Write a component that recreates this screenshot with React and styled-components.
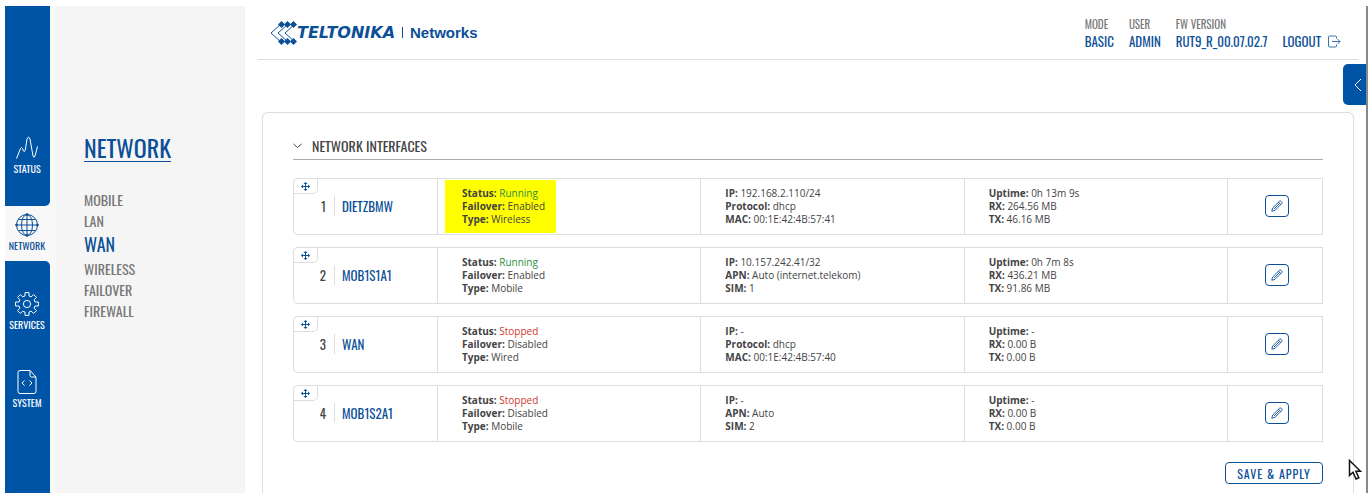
import React from "react";
import styled, { createGlobalStyle } from "styled-components";

const condensed = `"Oswald", "Roboto Condensed", "Liberation Sans Narrow", "Liberation Sans", sans-serif`;

const menu = ["Mobile", "LAN", "WAN", "Wireless", "Failover", "Firewall"];

const interfaces = [
  {
    name: "DIETZBMW",
    marked: true,
    running: true,
    status: [["Failover", "Enabled"], ["Type", "Wireless"]],
    address: [["IP", "192.168.2.110/24"], ["Protocol", "dhcp"], ["MAC", "00:1E:42:4B:57:41"]],
    traffic: [["Uptime", "0h 13m 9s"], ["RX", "264.56 MB"], ["TX", "46.16 MB"]],
  },
  {
    name: "MOB1S1A1",
    running: true,
    status: [["Failover", "Enabled"], ["Type", "Mobile"]],
    address: [["IP", "10.157.242.41/32"], ["APN", "Auto (internet.telekom)"], ["SIM", "1"]],
    traffic: [["Uptime", "0h 7m 8s"], ["RX", "436.21 MB"], ["TX", "91.86 MB"]],
  },
  {
    name: "WAN",
    running: false,
    status: [["Failover", "Disabled"], ["Type", "Wired"]],
    address: [["IP", "-"], ["Protocol", "dhcp"], ["MAC", "00:1E:42:4B:57:40"]],
    traffic: [["Uptime", "-"], ["RX", "0.00 B"], ["TX", "0.00 B"]],
  },
  {
    name: "MOB1S2A1",
    running: false,
    status: [["Failover", "Disabled"], ["Type", "Mobile"]],
    address: [["IP", "-"], ["APN", "Auto"], ["SIM", "2"]],
    traffic: [["Uptime", "-"], ["RX", "0.00 B"], ["TX", "0.00 B"]],
  },
];

const StatusIcon = () => (
  <svg width="24" height="24" viewBox="0 0 24 24">
    <path d="M1.5 22.5L5.5 12.5Q6.5 10.500 7.5 12.5L8.500 15Q9.500 16.5 10.3 14L12 3Q13.5 -.5 15 3L18 20Q19 22.500 20 20L22.5 10.5" />
  </svg>
);

const GlobeIcon = () => (
  <svg width="24" height="24" viewBox="0 0 24 24">
    <circle cx="12" cy="12" r="10.5" />
    <ellipse cx="12" cy="12" rx="5.5" ry="10.5" />
    <path d="M12 1.5v21M1.5 12h21M3.5 6.5h17M3.5 17.5h17" />
    <circle cx="12" cy="1.5" r="1" />
    <circle cx="12" cy="22.5" r="1" />
    <circle cx="1.5" cy="12" r="1" />
    <circle cx="22.5" cy="12" r="1" />
  </svg>
);

// eight teeth, four corners each
const gearPoints = Array.from({ length: 8 }, (_, i) =>
  [[-14, 8.3], [-10, 11.6], [10, 11.6], [14, 8.3]].map(([angle, r]) => {
    const a = ((i * 45 + angle) * Math.PI) / 180;
    return `${(12 + r * Math.sin(a)).toFixed(2)},${(12 - r * Math.cos(a)).toFixed(2)}`;
  })
).flat().join(" ");

const GearIcon = () => (
  <svg width="24" height="24" viewBox="0 0 24 24">
    <polygon points={gearPoints} />
    <circle cx="12" cy="12" r="3.6" />
  </svg>
);

const FileIcon = () => (
  <svg width="24" height="24" viewBox="0 0 24 24">
    <path d="M15 .5H5Q3 .5 3 2.5V21.5Q3 23.5 5 23.5H19Q21 23.5 21 21.5V7L15 .5V5.5Q15 7 16.5 7H21" />
    <path d="M9.5 10.5L7 13L9.5 15.5M14.5 10.5L17 13L14.5 15.5" />
  </svg>
);

const LogoMark = () => (
  <svg width="27" height="24" viewBox="0 0 27 24">
    <g fill="none" stroke="#0b4f97" strokeWidth="1">
      <path d="M11 3L1 12L11 21M18 3L8 12L18 21M25 3L15 12L25 21" />
    </g>
    <g fill="#0b4f97">
      {[3.5, 20.5].map((y) =>
        [11.5, 17.5, 23.5].map((x) => (
          <path key={`${x}-${y}`} d={`M${x - 3.5} ${y}l3.5-3.5 3.5 3.5-3.5 3.5z`} />
        ))
      )}
    </g>
  </svg>
);

const Field = ({ label, children }) => (
  <li>
    <b>{label}:</b> {children}
  </li>
);

const Fields = ({ items }) => items.map(([label, value]) => (
  <Field key={label} label={label}>{value}</Field>
));

const Row = ({ item, index }) => (
  <tr>
    <NameCell>
      <Handle aria-label="Reorder">
        <svg width="9" height="9" viewBox="0 0 9 9">
          <path d="M4.5 1v7M1 4.5h7" stroke="#0b4f97" />
          <path d="M4.5 0l2 2h-4zM4.5 9l2-2h-4zM0 4.5l2-2v4zM9 4.5l-2-2v4z" fill="#0b4f97" />
        </svg>
      </Handle>
      <Name>
        <span>{index + 1}</span>
        <a href="#edit">{item.name}</a>
      </Name>
    </NameCell>
    <Cell>
      <Details $marked={item.marked}>
        <Field label="Status">
          <State $running={item.running}>{item.running ? "Running" : "Stopped"}</State>
        </Field>
        <Fields items={item.status} />
      </Details>
    </Cell>
    <Cell>
      <Details><Fields items={item.address} /></Details>
    </Cell>
    <Cell>
      <Details><Fields items={item.traffic} /></Details>
    </Cell>
    <EditCell>
      <EditButton aria-label={`Edit ${item.name}`}>
        <svg width="12" height="12" viewBox="0 0 12 12" fill="none" stroke="#0b4f97">
          <path d="M.8 11.2L1.6 8L8.5 1.2Q9.2 .5 10 1.2L10.8 2Q11.5 2.8 10.8 3.5L4 10.4ZM7.5 2.2L9.8 4.5M3 9L9 3" strokeWidth=".9" />
        </svg>
      </EditButton>
    </EditCell>
  </tr>
);

const App = () => {
  return (
    <Shell>
      <GlobalStyle />
      <Rail>
        <RailGroup $top>
          <RailLink href="#status"><StatusIcon />STATUS</RailLink>
        </RailGroup>
        <RailLink href="#network" $active><GlobeIcon />NETWORK</RailLink>
        <RailGroup>
          <RailLink href="#services"><GearIcon />SERVICES</RailLink>
          <RailLink href="#system"><FileIcon />SYSTEM</RailLink>
        </RailGroup>
      </Rail>

      <SubMenu>
        <h2>NETWORK</h2>
        {menu.map((label) => (
          <SubLink key={label} href={`#${label}`} $active={label === "WAN"}>
            {label.toUpperCase()}
          </SubLink>
        ))}
      </SubMenu>

      <Content>
        <Header>
          <Logo href="#home">
            <LogoMark />
            <em>TELTONIKA</em>
            <i />
            <span>Networks</span>
          </Logo>
          <Info>
            <div><small>MODE</small>BASIC</div>
            <div><small>USER</small>ADMIN</div>
            <div><small>FW VERSION</small>RUT9_R_00.07.02.7</div>
            <Logout href="#logout">
              LOGOUT
              <svg width="13" height="13" viewBox="0 0 13 13" fill="none" stroke="#0b4f97" strokeWidth=".8">
                <path d="M8.5 3.5V2Q8.5 1 7.5 1H1.5Q.5 1 .5 2V11Q.5 12 1.5 12H7.5Q8.5 12 8.5 11V9.5M4 6.5H12M9.5 4L12 6.5L9.5 9" />
              </svg>
            </Logout>
          </Info>
        </Header>

        <Drawer aria-label="Open panel">
          <svg width="8" height="14" viewBox="0 0 8 14" fill="none" stroke="#fff">
            <path d="M7 1L1 7L7 13" />
          </svg>
        </Drawer>

        <Card>
          <Title>
            <svg width="9" height="6" viewBox="0 0 9 6" fill="none" stroke="#444">
              <path d="M.5 1L4.5 4.5L8.5 1" />
            </svg>
            NETWORK INTERFACES
          </Title>
          <Table>
            <colgroup>
              <col className="name" />
              <col />
              <col />
              <col />
              <col className="edit" />
            </colgroup>
            <tbody>
              {interfaces.map((item, index) => (
                <Row key={item.name} item={item} index={index} />
              ))}
            </tbody>
          </Table>
          <SaveButton>SAVE &amp; APPLY</SaveButton>
        </Card>
      </Content>

      <Pointer width="14" height="22" viewBox="0 0 14 22">
        <path d="M1.5 1.5V16.5L5 13.2L8 20L10.8 18.8L7.9 12.3H12.5Z" fill="#fff" stroke="#111" strokeWidth="1.5" />
      </Pointer>
    </Shell>
  );
};

export default App;

const GlobalStyle = createGlobalStyle`
  * {
    box-sizing: border-box;
  }

  body {
    margin: 0;
    background: #fff;
    color: #444;
    font-family: "Open Sans", sans-serif;
    font-size: 10px;
  }

  a {
    text-decoration: none;
  }

  button {
    padding: 0;
    cursor: pointer;
  }
`;

const Shell = styled.div`
  position: relative;
  display: flex;
  height: calc(100vh - 11px);
  margin: 6px 0 5px 5px;
  overflow: hidden;
`;

const Rail = styled.nav`
  display: flex;
  flex-flow: column;
  flex: none;
  width: 45px;
  background: #f8f8f8;
`;

const RailGroup = styled.div`
  display: flex;
  flex-flow: column;
  flex: ${(p) => (p.$top ? "none" : "1")};
  gap: 23px;
  padding: ${(p) => (p.$top ? "123px 0 22px" : "24px 0 0")};
  border-radius: ${(p) => (p.$top ? "0 0 5px 0" : "0 5px 0 0")};
  background: #0054a6;
`;

const RailLink = styled.a`
  display: flex;
  flex-flow: column;
  align-items: center;
  height: 55px;
  padding: 7px 1px 0 0;
  color: ${(p) => (p.$active ? "#0b4f97" : "#fff")};
  font-family: ${condensed};
  font-size: 10px;
  line-height: 17px;

  svg {
    fill: none;
    stroke: currentColor;
    stroke-width: 1;
    stroke-linejoin: round;
    overflow: visible;
  }
`;

const SubMenu = styled.nav`
  display: flex;
  flex-flow: column;
  flex: none;
  align-items: flex-start;
  width: 195px;
  padding: 127px 0 0 34px;
  background: linear-gradient(to right, #f8f8f8 6px, #f5f5f5 6px);

  h2 {
    margin: 0 0 27px;
    border-bottom: 1px solid #0b4f97;
    color: #0b4f97;
    font-family: ${condensed};
    font-size: 24px;
    font-weight: 400;
    line-height: 28px;
  }
`;

const SubLink = styled.a`
  color: ${(p) => (p.$active ? "#0b4f97" : "#777")};
  font-family: ${condensed};
  font-size: ${(p) => (p.$active ? "18px" : "14px")};
  line-height: ${(p) => (p.$active ? "27px" : "21px")};
`;

const Content = styled.main`
  display: flex;
  flex-flow: column;
  flex: 1;
  min-width: 0;
  border-right: 2px solid #888;
`;

const Header = styled.header`
  display: flex;
  align-items: center;
  justify-content: space-between;
  height: 54px;
  margin: 0 8px 0 13px;
  padding: 0 17px 0 12px;
  border-bottom: 1px solid #ddd;
`;

const Logo = styled.a`
  display: flex;
  align-items: center;
  color: #0b4f97;
  font-family: "Liberation Sans", sans-serif;
  font-size: 15px;
  font-weight: 700;

  em {
    font-family: "DejaVu Sans", sans-serif;
    font-size: 16px;
  }

  i {
    width: 1px;
    height: 11px;
    margin: 0 7px;
    background: #0b4f97;
  }
`;

const Info = styled.div`
  display: flex;
  align-items: flex-end;
  gap: 15px;
  color: #0b4f97;
  font-family: ${condensed};
  font-size: 13px;
  line-height: 17px;

  small {
    display: block;
    color: #777;
    font-size: 11px;
  }
`;

const Logout = styled.a`
  display: flex;
  align-items: center;
  gap: 7px;
  color: inherit;
`;

const Drawer = styled.button`
  align-self: flex-end;
  flex: none;
  width: 23px;
  height: 41px;
  margin: 4px 0 7px;
  padding: 4px 0 0 6px;
  border: 0;
  border-radius: 5px 0 0 5px;
  background: #0054a6;
`;

const Card = styled.section`
  display: flex;
  flex-flow: column;
  flex: 1;
  margin: 0 12px 0 17px;
  padding: 20px 30px 0;
  border: 1px solid #ddd;
  border-bottom: 0;
  border-radius: 6px 6px 0 0;
`;

const Title = styled.h3`
  display: flex;
  align-items: center;
  gap: 10px;
  margin: 0 0 6px;
  border-bottom: 1px solid #aaa;
  font-family: ${condensed};
  font-size: 14px;
  font-weight: 400;
  line-height: 26px;
`;

const Table = styled.table`
  width: 100%;
  table-layout: fixed;
  border-spacing: 0 12px;

  .name {
    width: 144px;
  }

  .edit {
    width: 96px;
  }
`;

const Cell = styled.td`
  height: 57px;
  padding: 0 7px;
  border: 1px solid #ddd;
  border-width: 1px 0 1px 1px;
`;

const NameCell = styled(Cell)`
  position: relative;
  padding: 0 0 2px;
  border-radius: 5px 0 0 5px;
`;

const EditCell = styled(Cell)`
  padding: 0 0 2px 3px;
  border-right-width: 1px;
  text-align: center;
`;

const Handle = styled.button`
  position: absolute;
  top: 0;
  left: 0;
  display: flex;
  align-items: center;
  justify-content: center;
  width: 24px;
  height: 15px;
  border: 1px solid #ddd;
  border-width: 0 1px 1px 0;
  border-radius: 0 0 5px 0;
  background: transparent;
`;

const Name = styled.div`
  display: flex;
  font-family: ${condensed};
  font-size: 13px;
  line-height: 20px;

  span {
    width: 41px;
    padding-right: 8px;
    border-right: 1px solid #ddd;
    text-align: right;
  }

  a {
    margin-left: 7px;
    color: #0b4f97;
  }
`;

const Details = styled.ul`
  width: ${(p) => (p.$marked ? "111px" : "auto")};
  margin: 0;
  padding: 7px 0 7px 17px;
  background: ${(p) => (p.$marked ? "#ff0" : "transparent")};
  line-height: 13px;
  list-style: none;
  white-space: nowrap;
`;

const State = styled.span`
  color: ${(p) => (p.$running ? "#2f8f3a" : "#d0392b")};
`;

const EditButton = styled.button`
  display: inline-flex;
  align-items: center;
  justify-content: center;
  width: 24px;
  height: 22px;
  border: 1px solid #0b4f97;
  border-radius: 4px;
  background: #fff;
`;

const SaveButton = styled.button`
  align-self: flex-end;
  flex: none;
  width: 98px;
  height: 22px;
  margin-top: 8px;
  border: 1px solid #0b4f97;
  border-radius: 4px;
  background: #fff;
  color: #0b4f97;
  font-family: ${condensed};
  font-size: 12px;
  letter-spacing: 1px;
`;

const Pointer = styled.svg`
  position: absolute;
  right: 6px;
  bottom: 12px;
`;
